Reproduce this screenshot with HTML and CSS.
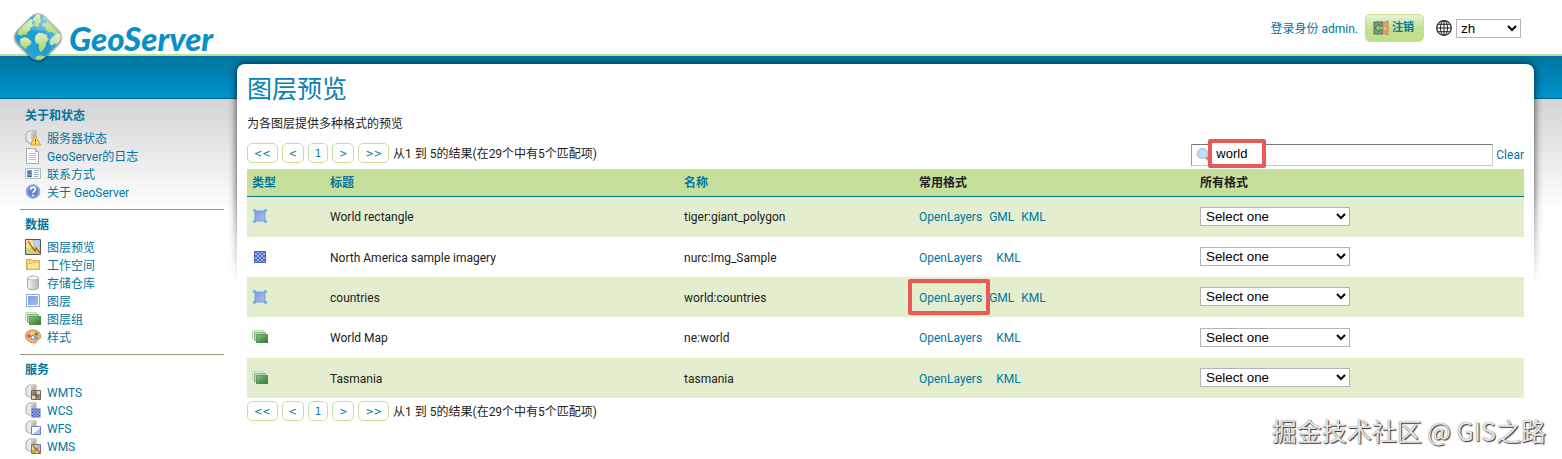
FILE: index.html
```html
<!doctype html>
<html lang="zh">

<head>
  <meta charset="utf-8">
  <title>GeoServer: 图层预览</title>
  <link rel="stylesheet" href="styles.css">
</head>

<body>
  <!-- shared icons -->
  <svg class="sprite" width="0" height="0" aria-hidden="true">
    <defs>
      <linearGradient id="gBlue" x1="0" y1="0" x2="1" y2="1">
        <stop offset="0" stop-color="#7f9ddd" /><stop offset="1" stop-color="#a6bdee" />
      </linearGradient>
      <linearGradient id="gGreen" x1="0" y1="0" x2="1" y2="1">
        <stop offset="0" stop-color="#8fc88b" /><stop offset="1" stop-color="#2c7033" />
      </linearGradient>
      <linearGradient id="gGrey" x1="0" y1="0" x2="1" y2="0">
        <stop offset="0" stop-color="#f4f4f4" /><stop offset="1" stop-color="#b5b5b5" />
      </linearGradient>
      <linearGradient id="gLand" x1="0" y1="0" x2="0" y2="1">
        <stop offset="0" stop-color="#e0efc4" /><stop offset="1" stop-color="#a9d35f" />
      </linearGradient>
      <linearGradient id="gSea" x1="0" y1="0" x2="0" y2="1">
        <stop offset="0" stop-color="#6fbfe2" /><stop offset=".5" stop-color="#1b9ad2" /><stop offset="1" stop-color="#27a5d8" />
      </linearGradient>
      <clipPath id="globeClip"><rect x="7" y="7" width="38" height="38" rx="9" transform="rotate(45 26 26)" /></clipPath>
      <symbol id="server" viewBox="0 0 16 16">
        <path d="M1 4 4 1h7v12H4l-3-2z" fill="#e6e6e6" stroke="#a5a5a5" />
        <path d="M4.500 1.500h6v11h-6z" fill="url(#gGrey)" />
        <path d="M6 4h4M6 6h4M6 8h4" stroke="#aaa" />
      </symbol>
      <symbol id="vector" viewBox="0 0 16 16">
        <path d="M3 3h10v10H3z" fill="url(#gBlue)" stroke="#7da0de" />
        <g fill="#9cdcf8" stroke="#2fa3e0"><circle cx="2.500" cy="2.500" r="1.100" /><circle cx="13.500" cy="2.500" r="1.100" /><circle cx="2.500" cy="13.500" r="1.100" /><circle cx="13.500" cy="13.500" r="1.100" /></g>
      </symbol>
      <symbol id="raster" viewBox="0 0 16 16">
        <path d="M2 2h12v12H2z" fill="#4d68bc" />
        <path d="M3 4h2v2H3zM7 4h2v2H7zM11 4h2v2h-2zM5 6h2v2H5zM9 6h2v2H9zM3 8h2v2H3zM7 8h2v2H7zM11 8h2v2h-2zM5 10h2v2H5zM9 10h2v2H9zM5 3h2v1H5zM9 3h2v1H9zM3 12h2v1H3zM7 12h2v1H7zM11 12h2v1h-2z" fill="#9bb4ec" />
      </symbol>
      <symbol id="group" viewBox="0 0 16 16">
        <path d="M.5 1.500h11v8H.5z" fill="#e4f0df" stroke="#c3ddbb" />
        <path d="M2.500 3.500h11v8h-11z" fill="#b7dab0" stroke="#86b780" />
        <path d="M4 5h12v9H4z" fill="url(#gGreen)" />
        <path d="M4.500 5.500h11v8h-11z" fill="none" stroke="#4f9350" stroke-opacity=".6" />
      </symbol>
    </defs>
  </svg>

  <header class="header">
    <a class="logo" href="#">
      <svg class="logo-mark" viewBox="0 0 52 54" aria-hidden="true">
        <rect x="7" y="7" width="38" height="38" rx="9" transform="rotate(45 26 26)" fill="url(#gSea)" />
        <g clip-path="url(#globeClip)">
          <g fill="url(#gLand)" transform="scale(.3333) translate(-6 -12)">
            <path d="m24 72 18-20 20-16 7 5-3 8 5 9-9 3-3 10-7 5-1 8-9-2-7 5-12-5z" />
            <path d="m30 96 14-5 10 3 11 10-4 10-9 4-6 9-14-14z" />
            <path d="m68 38 12-18 12-2-2 14 4 12-8 6 2 8-8 3-10-8 5-7z" />
            <path d="m96 16 18 4 46 50-10 4-14 8-10-8-9 2-8-7-3-9-10-4 4-10 8 4 4-8-10-6z" />
            <path d="m76 86 10-9 12 2 12 5 3 10 4 3-9 10-1 10-9 14-8 5-4-15 1-9-9-4-4-10z" />
            <path d="m120 98 14-14 10-6 18 14-22 20-6-3-9 7-6-7zM76 150l14-5 20 4-8 18H90z" />
          </g>
          <path d="M2 26 26 2l24 24Q26 12 2 26z" fill="#fff" opacity=".18" />
        </g>
        <rect x="7" y="7" width="38" height="38" rx="9" transform="rotate(45 26 26)" fill="none" stroke="#8fa9a2" stroke-opacity=".7" />
      </svg>
      <span class="logo-text">GeoServer</span>
    </a>
    <div class="user-bar">
      <span class="username">登录身份 admin.</span>
      <button class="logout" type="button">
        <svg class="icon" viewBox="0 0 16 16" aria-hidden="true">
          <path d="M1 2h9v12H1z" fill="#849587" stroke="#5d685d" />
          <path d="M10 6H6V4L2 8l4 4v-2h4z" fill="#8cc67d" stroke="#3c8048" />
          <path d="m10 3 5-2v14l-5-2z" fill="#e0a26b" stroke="#c98a55" />
          <circle cx="11.500" cy="8.500" r=".8" fill="#fff0b0" />
        </svg>
        注销
      </button>
      <label class="lang-icon" for="lang" aria-label="Language">
        <svg class="icon" viewBox="0 0 16 16" fill="none" stroke="#222" aria-hidden="true">
          <circle cx="8" cy="8" r="7.300" stroke-width="1.200" /><ellipse cx="8" cy="8" rx="3.500" ry="7.300" />
          <path d="M8 .7v14.600M.7 8h14.600M2 4.300h12M2 11.700h12" />
        </svg>
      </label>
      <select id="lang" class="lang">
        <option>zh</option>
      </select>
    </div>
  </header>

  <div class="wrapper">
    <nav class="sidebar">
      <section>
        <h2>关于和状态</h2>
        <ul>
          <li><a href="#"><svg class="icon" viewBox="0 0 16 16"><use href="#server" /><path d="m10.500 5.500 5 9.500h-10z" fill="#fbd85d" stroke="#d0a238" /><path d="M10.500 9v3M10.500 13v1" stroke="#8a6a1a" /></svg>服务器状态</a></li>
          <li><a href="#"><svg class="icon" viewBox="0 0 16 16"><path d="M1.500.5h9l3 3v12h-12z" fill="#fafafa" stroke="#aaa" /><path d="M10.500.5v3h3" fill="#ddd" stroke="#aaa" /><path d="M4 5.500h7M4 7.500h7M4 9.500h7M4 11.500h7" stroke="#c0c0c0" /></svg>GeoServer的日志</a></li>
          <li><a href="#"><svg class="icon" viewBox="0 0 16 16"><path d="M.5 2.500h15v10H.5z" fill="#f5f7fb" stroke="#b5bbc4" /><path d="M2 4h5v7H2z" fill="#6ca1dc" /><circle cx="4.500" cy="6.500" r="1.500" fill="#9b6443" /><path d="M2.500 11q2-3 4 0z" fill="#284d91" /><path d="M9 4.500h5M9 6.500h4M9 8.500h5M9 10.500h4" stroke="#9db0c8" /></svg>联系方式</a></li>
          <li><a href="#"><svg class="icon" viewBox="0 0 16 16"><circle cx="8" cy="7.500" r="6.800" fill="#5d83ca" stroke="#91a5cc" /><circle cx="8" cy="7.500" r="5.700" fill="none" stroke="#b6caee" stroke-width=".7" /><path d="M5.700 5.700q0-2.300 2.300-2.300t2.300 2q0 1.200-1.200 1.900-1.100.6-1.100 1.700M8 10.500v1.500" fill="none" stroke="#fff" stroke-width="1.600" /></svg>关于 GeoServer</a></li>
        </ul>
      </section>
      <section>
        <h2>数据</h2>
        <ul>
          <li><a href="#"><svg class="icon" viewBox="0 0 16 16"><path d="M.5.5h15v15H.5z" fill="#b9d98a" stroke="#555" /><path d="M9 1h6v7H9z" fill="#9dc3ec" /><path d="M1 1h6l2 6-5 3-3-2z" fill="#f7e39b" /><path d="M10 8h5v3h-5zM4 11h4v3H4z" fill="#eacb54" /><path d="m3 2 4 6 3 4 1-3 4 5" fill="none" stroke="#d94a25" stroke-width="1.300" /><path d="M11 1v7M13 1v7M9 3h6M9 5h6" stroke="#d4e6f7" stroke-width=".5" /></svg>图层预览</a></li>
          <li><a href="#"><svg class="icon" viewBox="0 0 16 16"><path d="M1.500 3.500v-1h5l1 1h7v9h-13z" fill="#f8d478" stroke="#dca746" /><path d="M2.500 6.500h5l1-1h5.500v6.500h-11.500z" fill="#fce9a8" stroke="#efbd56" /></svg>工作空间</a></li>
          <li><a href="#"><svg class="icon" viewBox="0 0 16 16"><path d="M2.500 3v9.500c0 3 11 3 11 0V3z" fill="url(#gGrey)" stroke="#aaa" /><ellipse cx="8" cy="3" rx="5.500" ry="2" fill="#f7f7f7" stroke="#b5b5b5" /></svg>存储仓库</a></li>
          <li><a href="#"><svg class="icon" viewBox="0 0 16 16"><path d="M1.500 1.500h13v12h-13z" fill="#fff" stroke="#8fa8d8" /><path d="M3 3h10v9H3z" fill="url(#gBlue)" /></svg>图层</a></li>
          <li><a href="#"><svg class="icon"><use href="#group" /></svg>图层组</a></li>
          <li><a href="#"><svg class="icon" viewBox="0 0 16 16"><path d="M8 1c5 0 8 3 7.500 7-.5 3-2 2-3 3s0 3-3 3C5 14 .5 11 .5 7 .5 3 4 1 8 1z" fill="#eeb27b" stroke="#c98a52" /><circle cx="4" cy="7" r="1.800" fill="#df5343" /><circle cx="7" cy="4" r="1.300" fill="#f4e17a" /><circle cx="11.500" cy="5" r="1.700" fill="#4e9c56" /><circle cx="8" cy="8.500" r="1.900" fill="#fff" stroke="#4d84c1" /><circle cx="11.500" cy="9" r="1.400" fill="#5296d6" /></svg>样式</a></li>
        </ul>
      </section>
      <section>
        <h2>服务</h2>
        <ul>
          <li><a href="#"><svg class="icon" viewBox="0 0 16 16"><use href="#server" /><path d="M6.500 6.500h9v9h-9z" fill="#d9dcc5" stroke="#666" /><path d="M7 7h4v4H7zM11 11h4v4h-4z" fill="#84b779" /><path d="m8 8 6 6" stroke="#d75a3f" stroke-width="2" /><path d="M11 6.500v9M6.500 11h9" stroke="#555" /></svg>WMTS</a></li>
          <li><a href="#"><svg class="icon" viewBox="0 0 16 16"><use href="#server" /><use href="#raster" x="5" y="5" width="12" height="12" /></svg>WCS</a></li>
          <li><a href="#"><svg class="icon" viewBox="0 0 16 16"><use href="#server" /><path d="M6.500 6.500h9v8h-9z" fill="#fff" stroke="#6984b7" /><path d="M15 8v6H8z" fill="#a8c0ed" /></svg>WFS</a></li>
          <li><a href="#"><svg class="icon" viewBox="0 0 16 16"><use href="#server" /><path d="M6.500 6.500h9v9h-9z" fill="#f3d870" stroke="#777" /><path d="M11 7h4v4h-4z" fill="#9abfe5" /><path d="M7 12h4v3H7z" fill="#93bf65" /><path d="m8 7 3 5 1-1 3 4" fill="none" stroke="#d94c2c" stroke-width="1.400" /></svg>WMS</a></li>
        </ul>
      </section>
    </nav>

    <main class="page">
      <div class="page-shadow"></div>
      <div class="page-pane">
        <h1>图层预览</h1>
        <p class="desc">为各图层提供多种格式的预览</p>

        <div class="toolbar">
          <div class="pager">
            <a href="#">&lt;&lt;</a><a href="#">&lt;</a><a href="#">1</a><a href="#">&gt;</a><a href="#">&gt;&gt;</a>
            <span>从1 到 5的结果(在29个中有5个匹配项)</span>
          </div>
          <form class="search">
            <label for="filter" aria-label="Search">
              <svg class="icon" viewBox="0 0 16 16"><path d="m10 10 4 4" stroke="#d08b55" stroke-width="3" /><circle cx="6.500" cy="6.500" r="5" fill="#c0e0f6" stroke="#b5cbe0" stroke-width="1.500" /></svg>
            </label>
            <input type="text" id="filter" value="world">
            <a href="#">Clear</a>
            <span class="mark mark-search">world</span>
          </form>
        </div>

        <table class="layers">
          <thead>
            <tr>
              <th class="col-type"><a href="#">类型</a></th>
              <th class="col-title"><a href="#">标题</a></th>
              <th class="col-name"><a href="#">名称</a></th>
              <th class="col-common">常用格式</th>
              <th>所有格式</th>
            </tr>
          </thead>
          <tbody>
            <tr>
              <td><svg class="icon"><use href="#vector" /></svg></td>
              <td>World rectangle</td>
              <td>tiger:giant_polygon</td>
              <td><div class="formats"><a href="#">OpenLayers</a><a href="#">GML</a><a href="#">KML</a></div></td>
              <td><select aria-label="World rectangle"><option>Select one</option></select></td>
            </tr>
            <tr>
              <td><svg class="icon"><use href="#raster" /></svg></td>
              <td>North America sample imagery</td>
              <td>nurc:Img_Sample</td>
              <td><div class="formats"><a href="#">OpenLayers</a><span></span><a href="#">KML</a></div></td>
              <td><select aria-label="North America sample imagery"><option>Select one</option></select></td>
            </tr>
            <tr>
              <td><svg class="icon"><use href="#vector" /></svg></td>
              <td>countries</td>
              <td>world:countries</td>
              <td><div class="formats"><a href="#">OpenLayers</a><a href="#">GML</a><a href="#">KML</a><i class="mark mark-link"></i></div></td>
              <td><select aria-label="countries"><option>Select one</option></select></td>
            </tr>
            <tr>
              <td><svg class="icon"><use href="#group" /></svg></td>
              <td>World Map</td>
              <td>ne:world</td>
              <td><div class="formats"><a href="#">OpenLayers</a><span></span><a href="#">KML</a></div></td>
              <td><select aria-label="World Map"><option>Select one</option></select></td>
            </tr>
            <tr>
              <td><svg class="icon"><use href="#group" /></svg></td>
              <td>Tasmania</td>
              <td>tasmania</td>
              <td><div class="formats"><a href="#">OpenLayers</a><span></span><a href="#">KML</a></div></td>
              <td><select aria-label="Tasmania"><option>Select one</option></select></td>
            </tr>
          </tbody>
        </table>

        <div class="pager">
          <a href="#">&lt;&lt;</a><a href="#">&lt;</a><a href="#">1</a><a href="#">&gt;</a><a href="#">&gt;&gt;</a>
          <span>从1 到 5的结果(在29个中有5个匹配项)</span>
        </div>
      </div>
    </main>
  </div>

  <div class="watermark">掘金技术社区 @ GIS之路</div>
</body>

</html>
```
FILE: styles.css
```css
* {
  box-sizing: border-box;
}

body {
  margin: 0;
  font-family: Roboto, "Noto Sans CJK SC", sans-serif;
  font-size: 12px;
  line-height: 18px;
  color: #222;
  background: #fff;
}

a {
  color: #0076a1;
  text-decoration: none;
}

h1,
h2,
p,
ul {
  margin: 0;
  padding: 0;
}

.sprite {
  position: absolute;
}

.icon {
  display: block;
  flex: none;
  width: 16px;
  height: 16px;
}

select {
  height: 19px;
  padding: 0 1px;
  font-family: "Liberation Sans", Arial, sans-serif;
  color: #000;
  background-color: #fff;
  border: 1px solid #b5b5b5;
  border-radius: 0;
}

/* header */
.header {
  display: flex;
  justify-content: space-between;
  height: 56px;
  padding: 0 41px 0 12px;
  border-bottom: 2px solid #bfe09a;
}

.logo {
  display: flex;
  gap: 5px;
  height: 54px;
}

.logo-mark {
  position: relative;
  z-index: 2;
  width: 52px;
  height: 54px;
  margin-top: 11px;
  overflow: visible;
  filter: drop-shadow(0 1px 1px rgba(0, 0, 0, 0.5));
}

.logo-text {
  margin-top: 20px;
  font-family: Lato, sans-serif;
  font-size: 33px;
  font-style: italic;
  font-weight: 900;
  line-height: 36px;
  color: #0a8fc6;
}

.user-bar {
  display: flex;
  align-items: center;
  height: 56px;
}

.username {
  padding-top: 1px;
  color: #0076a1;
}

.logout {
  display: flex;
  align-items: center;
  gap: 3px;
  height: 28px;
  margin: 0 12px 0 7px;
  padding: 0 9px 0 7px;
  font: bold 11px/18px Roboto, "Noto Sans CJK SC", sans-serif;
  color: #0076a1;
  background: linear-gradient(#e8f4d4, #c2e192 50%, #bfe08a);
  border: 1px solid #c6e09b;
  border-radius: 5px;
}

.lang {
  width: 65px;
  margin-left: 4px;
  padding: 0;
}

/* page frame */
.wrapper {
  display: flex;
  padding-right: 28px;
  background:
    linear-gradient(#0076a1, #0092cc) top / 100% 42px no-repeat,
    linear-gradient(#00658c, #00658c) 0 42px / 100% 1px no-repeat,
    linear-gradient(#d4d4d4, #fff) 0 43px / 100% 112px no-repeat;
}

.sidebar {
  flex: none;
  width: 237px;
  padding: 45px 13px 0 20px;
}

.sidebar section {
  padding: 6px 5px 7px;
}

.sidebar section + section {
  border-top: 1px solid #999982;
}

.sidebar h2 {
  margin-bottom: 5px;
  font-size: 12px;
  line-height: 18px;
  color: #0076a1;
}

.sidebar ul {
  list-style: none;
}

.sidebar a {
  display: flex;
  gap: 6px;
  height: 18px;
}

.page {
  position: relative;
  flex: 1;
  padding-top: 8px;
}

/* shadow behind the pane, fades out downwards */
.page-shadow {
  position: absolute;
  top: 0;
  left: -10px;
  right: -10px;
  height: 230px;
  padding: 8px 10px 0;
  overflow: hidden;
  -webkit-mask-image: linear-gradient(#000 60%, transparent);
  mask-image: linear-gradient(#000 60%, transparent);
}

.page-shadow::before {
  content: "";
  display: block;
  height: 300px;
  border-radius: 8px;
  box-shadow: 0 0 8px rgba(0, 0, 0, 0.75);
}

.page-pane {
  position: relative;
  padding: 10px;
  background: #fff;
  border-radius: 8px 8px 0 0;
}

.page-pane h1 {
  font-size: 25px;
  font-weight: normal;
  line-height: 32px;
  color: #0a80b4;
}

.desc {
  margin-top: 9px;
}

/* pager and search */
.toolbar {
  display: flex;
  justify-content: space-between;
  height: 23px;
  margin: 10px 0 3px;
}

.pager {
  display: flex;
  gap: 4px;
  height: 20px;
  line-height: 22px;
}

.pager a {
  padding: 0 6px;
  font-family: "DejaVu Sans Condensed", "DejaVu Sans", sans-serif;
  font-size: 11px;
  line-height: 20px;
  border: 1px solid #c6e09b;
  border-radius: 5px;
}

.search {
  position: relative;
  display: flex;
  align-items: flex-end;
  gap: 3px;
}

.search label {
  position: absolute;
  left: 5px;
  top: 4px;
}

.search input {
  width: 302px;
  height: 22px;
  padding: 0 0 0 24px;
  font-family: "Liberation Sans", Arial, sans-serif;
  background: none;
  border: 1px solid;
  border-color: #777 #c8c8c8 #c8c8c8 #999;
}

.search a {
  line-height: 22px;
}

/* layer table */
.layers {
  width: 100%;
  margin-bottom: 3px;
  table-layout: fixed;
  border-collapse: collapse;
}

.layers th {
  height: 27px;
  padding: 2px 5px 0;
  text-align: left;
  background: #c6e09b;
  border-bottom: 1px solid #007c80;
}

.layers td {
  height: 40px;
  padding: 1px 5px 0;
}

.layers td:first-child,
.layers td:last-child {
  padding: 0 5px 1px;
}

.layers tr:nth-child(3n + 1) td {
  height: 41px;
}

.layers tbody tr:nth-child(odd) {
  background: #e2eecd;
}

.layers select {
  display: block;
  width: 150px;
}

.col-type {
  width: 78px;
}

.col-title {
  width: 354px;
}

.col-name {
  width: 235px;
}

.col-common {
  width: 281px;
}

.formats {
  position: relative;
  display: flex;
  gap: 7px;
}

/* highlight frames */
.mark {
  position: absolute;
  border: 4px solid #ea5956;
  border-radius: 2px;
}

.mark-search {
  left: 17px;
  top: -4px;
  width: 58px;
  height: 29px;
  padding-left: 4px;
  font: 13px/22px "Liberation Sans", Arial, sans-serif;
  color: #000;
  background: #fff;
}

.mark-link {
  left: -11px;
  top: -10px;
  width: 82px;
  height: 36px;
}

.watermark {
  position: absolute;
  right: 16px;
  bottom: 11px;
  font-family: "Noto Sans CJK SC", sans-serif;
  font-size: 25px;
  line-height: 36px;
  color: #e4e4e4;
  text-shadow: 1px 1px 1px #333, 0 0 1px #777;
}
```
